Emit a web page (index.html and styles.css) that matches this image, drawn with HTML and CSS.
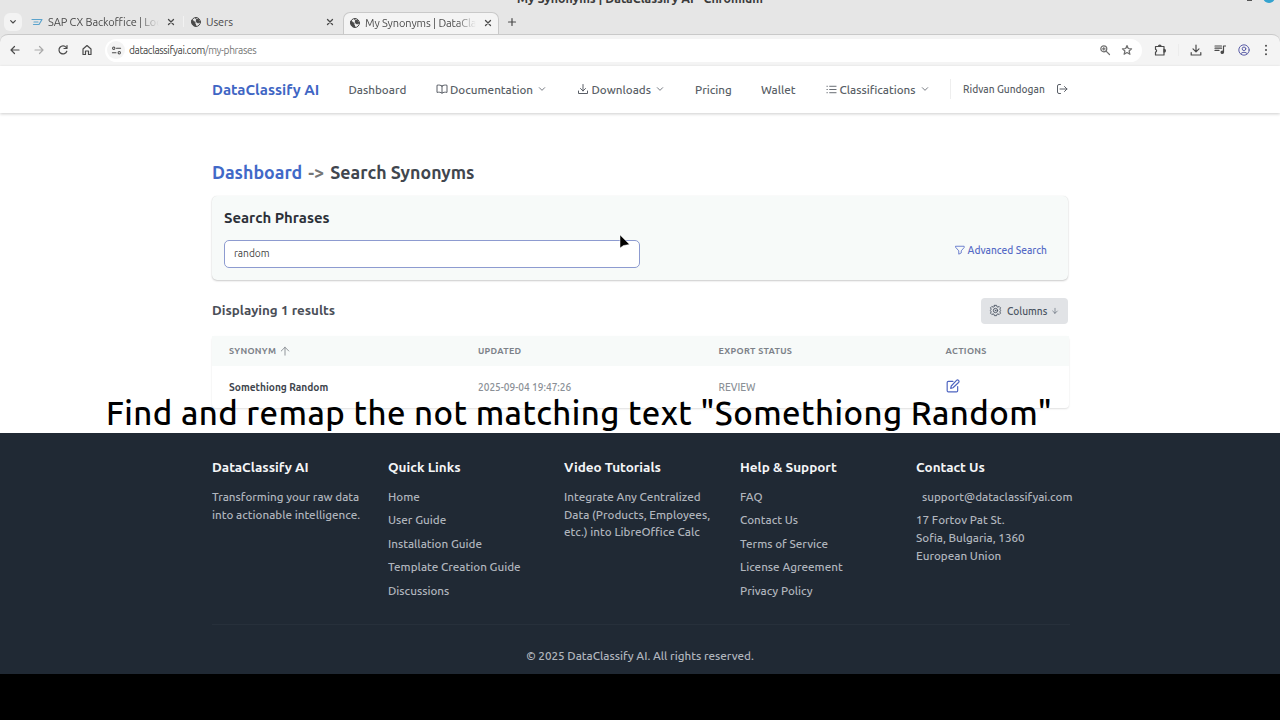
FILE: index.html
```html
<!DOCTYPE html>
<html lang="en">

<head>
    <meta charset="UTF-8">
    <meta name="viewport" content="width=device-width, initial-scale=1.0">
    <title>My Synonyms | DataClassify AI</title>
    <link rel="stylesheet" href="styles.css">
</head>

<body>
    <div class="browser">
        <div class="titlebar">
            <span class="window-title">My Synonyms | DataClassify AI - Chromium</span>
            <span class="window-min"></span>
            <span class="window-close"></span>
        </div>
        <div class="tabs">
            <div class="tab-search">
                <svg class="icon-8" viewBox="0 0 24 24"><path d="M5 8l7 7 7-7" stroke-width="3.5"/></svg>
            </div>
            <div class="tab tab-sap">
                <svg class="sap" viewBox="0 0 12 8"><path d="M1 1.500H11L8 6.500H2.500M3 4h4"/></svg>
                <span class="tab-title fade">SAP CX Backoffice | Loc</span>
                <span class="tab-close"><svg viewBox="0 0 8 8"><path d="M1.500 1.500l5 5M6.500 1.500l-5 5"/></svg></span>
            </div>
            <div class="tab tab-users">
                <svg class="globe" viewBox="0 0 12 12"><circle cx="6" cy="6" r="4.500"/><path class="fill" d="M2 4.500C4 5 5.500 6 5 7.500L6 10C3 10 1.500 7 2 4.500zM6 1.500C5 3.500 7 4 8 3l2 3-2 1-2-1.500" /></svg>
                <span class="tab-title">Users</span>
                <span class="tab-close"><svg viewBox="0 0 8 8"><path d="M1.500 1.500l5 5M6.500 1.500l-5 5"/></svg></span>
            </div>
            <div class="tab tab-active">
                <svg class="globe" viewBox="0 0 12 12"><circle cx="6" cy="6" r="4.500"/><path class="fill" d="M2 4.500C4 5 5.500 6 5 7.500L6 10C3 10 1.500 7 2 4.500zM6 1.500C5 3.500 7 4 8 3l2 3-2 1-2-1.500" /></svg>
                <span class="tab-title fade">My Synonyms | DataCla</span>
                <span class="tab-close"><svg viewBox="0 0 8 8"><path d="M1.500 1.500l5 5M6.500 1.500l-5 5"/></svg></span>
            </div>
            <svg class="tab-new" viewBox="0 0 10 10"><path d="M5 1.500v7M1.500 5h7"/></svg>
        </div>
        <div class="toolbar">
            <svg class="tool" viewBox="0 0 12 12"><path d="M10 6H2M5.500 2.500L2 6l3.500 3.500"/></svg>
            <svg class="tool muted" viewBox="0 0 12 12"><path d="M2 6h8M6.500 2.500L10 6l-3.500 3.500"/></svg>
            <svg class="tool" viewBox="0 0 12 12"><path d="M9.800 7.200A4 4 0 1 1 9.200 3.500M10 1.500v3H7"/></svg>
            <svg class="tool" viewBox="0 0 12 12"><path d="M2 10.500V5l4-3.500L10 5v5.500H7.500V7h-3v3.500z"/></svg>
            <div class="omnibox">
                <span class="site-info"><svg viewBox="0 0 12 12"><circle cx="3" cy="3.500" r="1.300"/><path d="M6 3.500h4.500M1.500 8.500h4"/><circle cx="9" cy="8.500" r="1.300"/></svg></span>
                <span class="url">dataclassifyai.com<span>/my-phrases</span></span>
                <svg class="tool soft zoom-in" viewBox="0 0 12 12"><circle cx="4.800" cy="4.800" r="3"/><path d="M7.300 7.300L10.500 10.500M3.500 4.800h2.600M4.800 3.500v2.600"/></svg>
                <svg class="tool soft" viewBox="0 0 12 12"><path d="M6 1.500l1.300 3 3.300.3-2.500 2.200.8 3.300L6 8.600l-2.900 1.700.8-3.300-2.500-2.200 3.300-.3z"/></svg>
            </div>
            <svg class="tool puzzle" viewBox="0 0 12 12"><path d="M1.500 2.500h8.500v8.500h-8.500v-2.800a1.500 1.500 0 0 0 0-2.900z"/><path class="fill" d="M4.500 2.500a1.300 1.300 0 0 1 2.600 0zM10 5.300a1.400 1.400 0 0 1 0 2.800z"/></svg>
            <span class="tool-line"></span>
            <svg class="tool download" viewBox="0 0 12 12"><path d="M6 1v6.500M3 4.800l3 3 3-3M1.200 8.500v2.500h9.600V8.500"/></svg>
            <svg class="tool music" viewBox="0 0 12 12"><path d="M1 2h6.500M1 4.200h6.500M1 6.400h4M9.500 8V2h2"/><circle class="fill" cx="8.300" cy="8.300" r="1.200"/></svg>
            <svg class="tool profile" viewBox="0 0 12 12"><circle cx="6" cy="6" r="5.200"/><circle cx="6" cy="4.800" r="1.800"/><path d="M2.700 9.800C4 7.700 8 7.700 9.300 9.800"/></svg>
            <svg class="tool more" viewBox="0 0 12 12"><circle cx="6" cy="1.800" r="1"/><circle cx="6" cy="6" r="1"/><circle cx="6" cy="10.200" r="1"/></svg>
        </div>
    </div>

    <header class="header">
        <nav class="nav">
            <a class="brand">DataClassify AI</a>
            <a>Dashboard</a>
            <a>
                <svg class="icon-12" viewBox="0 0 24 24"><path d="M12 6C9.500 4.200 6 3.600 2 4.500v14.300c4-.9 7.500-.3 10 1.500 2.500-1.800 6-2.400 10-1.500V4.500C18 3.600 14.500 4.200 12 6zm0 0v14.300"/></svg>
                <span class="nav-text">Documentation</span>
                <svg class="chevron" viewBox="0 0 24 24"><path d="M4 8l8 8 8-8"/></svg>
            </a>
            <a>
                <svg class="icon-12" viewBox="0 0 24 24"><path d="M3 16v5h18v-5M7 11l5 5 5-5M12 3v13"/></svg>
                <span class="nav-text">Downloads</span>
                <svg class="chevron" viewBox="0 0 24 24"><path d="M4 8l8 8 8-8"/></svg>
            </a>
            <a>Pricing</a>
            <a>Wallet</a>
            <a>
                <svg class="icon-11" viewBox="0 0 24 24"><path d="M8 5h14M8 12h14M8 19h14M2 5h1M2 12h1M2 19h1"/></svg>
                <span class="nav-text">Classifications</span>
                <svg class="chevron" viewBox="0 0 24 24"><path d="M4 8l8 8 8-8"/></svg>
            </a>
            <div class="user">
                <span>Ridvan Gundogan</span>
                <svg class="icon-12" viewBox="0 0 24 24"><path d="M9 3H6a3 3 0 0 0-3 3v12a3 3 0 0 0 3 3h3M8 12h14M17 7l5 5-5 5"/></svg>
            </div>
        </nav>
    </header>

    <main class="main">
        <h1 class="breadcrumb"><a>Dashboard</a><span class="arrow">-&gt;</span><span>Search Synonyms</span></h1>

        <section class="search">
            <div>
                <h2>Search Phrases</h2>
                <div class="search-input">random</div>
            </div>
            <a class="advanced">
                <svg class="icon-10" viewBox="0 0 24 24"><path d="M2 3h20v3l-7 8v5l-6 3v-8L2 6z"/></svg>
                <span>Advanced Search</span>
            </a>
        </section>

        <div class="results-bar">
            <h3>Displaying 1 results</h3>
            <div class="columns-btn">
                <svg class="icon-13" viewBox="0 0 24 24"><path d="M10 2.500h4l.6 2.500 1.800.8 2.300-1.300 2.600 2.600-1.300 2.300.8 1.800.7.8-.7.8-.8 1.800 1.300 2.300-2.600 2.600-2.300-1.300-1.800.8-.6 2.500h-4l-.6-2.500-1.800-.8-2.300 1.300-2.600-2.600L4 14.600l-.8-1.800-.7-.8.7-.8.8-1.800-1.300-2.300 2.600-2.600 2.300 1.300 1.800-.8z"/><circle cx="12" cy="12" r="4"/><circle cx="12" cy="12" r=".6"/></svg>
                <span>Columns</span>
                <svg class="icon-8" viewBox="0 0 24 24"><path d="M12 4v15M5 12l7 7 7-7"/></svg>
            </div>
        </div>

        <div class="table">
            <div class="row table-head">
                <span>SYNONYM <svg class="icon-10" viewBox="0 0 24 24"><path d="M12 22V3M3 12l9-9 9 9"/></svg></span>
                <span>UPDATED</span>
                <span>EXPORT STATUS</span>
                <span>ACTIONS</span>
            </div>
            <div class="row table-row">
                <span class="synonym">Somethiong Random</span>
                <span>2025-09-04 19:47:26</span>
                <span>REVIEW</span>
                <span><svg class="edit" viewBox="0 0 24 24"><path d="M12 4H4a2 2 0 0 0-2 2v14a2 2 0 0 0 2 2h14a2 2 0 0 0 2-2v-7M9 12l9-9.500a2.300 2.300 0 0 1 3.500 3.500L12 15l-4 1z"/></svg></span>
            </div>
        </div>
    </main>

    <footer class="footer">
        <div class="footer-cols">
            <div>
                <h4>DataClassify AI</h4>
                <p>Transforming your raw data<br>into actionable intelligence.</p>
            </div>
            <div>
                <h4>Quick Links</h4>
                <ul>
                    <li>Home</li>
                    <li>User Guide</li>
                    <li>Installation Guide</li>
                    <li>Template Creation Guide</li>
                    <li>Discussions</li>
                </ul>
            </div>
            <div>
                <h4>Video Tutorials</h4>
                <p>Integrate Any Centralized<br>Data (Products, Employees,<br>etc.) into LibreOffice Calc</p>
            </div>
            <div>
                <h4>Help &amp; Support</h4>
                <ul>
                    <li>FAQ</li>
                    <li>Contact Us</li>
                    <li>Terms of Service</li>
                    <li>License Agreement</li>
                    <li>Privacy Policy</li>
                </ul>
            </div>
            <div>
                <h4>Contact Us</h4>
                <p class="email">support@dataclassifyai.com</p>
                <p>17 Fortov Pat St.<br>Sofia, Bulgaria, 1360<br>European Union</p>
            </div>
        </div>
        <p class="copyright">© 2025 DataClassify AI. All rights reserved.</p>
    </footer>

    <!-- video overlay -->
    <div class="caption">Find and remap the not matching text "Somethiong Random"</div>
    <svg class="cursor" viewBox="0 0 12 16"><path d="M1 1v13l3.500-2.500 6-1z"/></svg>
</body>

</html>
```

FILE: styles.css
```css
* {
    box-sizing: border-box;
}

body {
    margin: 0;
    height: 720px;
    overflow: hidden;
    position: relative;
    background: #000;
    font-family: Ubuntu, "Noto Sans", sans-serif;
    font-size: 11.67px;
    font-weight: 500;
    color: #4b5563;
    white-space: nowrap;
}

h1, h2, h3, h4, p, ul {
    margin: 0;
    padding: 0;
}

svg {
    display: block;
    flex: none;
    fill: none;
    stroke: currentColor;
    stroke-width: 2;
    stroke-linecap: round;
    stroke-linejoin: round;
}

.icon-8 { width: 8px; height: 8px; }
.icon-10 { width: 10px; height: 10px; }
.icon-11 { width: 11px; height: 11px; }
.icon-12 { width: 12px; height: 12px; }
.icon-13 { width: 13px; height: 13px; }

/* Browser window */
.browser {
    height: 66px;
    background: #e6e6e6;
    font-weight: 400;
    color: #4a4a4a;
}

.titlebar {
    height: 12px;
    position: relative;
}

.window-title {
    position: absolute;
    left: 0;
    right: 0;
    top: -10px;
    text-align: center;
    font-size: 12.35px;
    line-height: 16px;
    font-weight: 700;
    color: #3a3a3a;
}

.window-min {
    position: absolute;
    left: 1247px;
    top: -1px;
    width: 5px;
    height: 2px;
    background: #555;
}

.window-close {
    position: absolute;
    left: 1263px;
    top: -9px;
    width: 12px;
    height: 12px;
    border-radius: 50%;
    background: #35a3cf;
}

.tabs {
    display: flex;
    height: 22px;
    align-items: center;
    padding-left: 4px;
    font-size: 11px;
}

.tab-search {
    display: flex;
    align-items: center;
    justify-content: center;
    width: 18px;
    height: 18px;
    margin-bottom: 2px;
    border-radius: 6px;
    background: #f3f3f3;
}

.tab {
    display: flex;
    align-items: center;
    height: 22px;
    padding-bottom: 2px;
}

.tab-title {
    flex: 1;
    margin-left: 4px;
    overflow: hidden;
    letter-spacing: -0.1px;
}

.tab-close svg {
    width: 8px;
    height: 8px;
    stroke-width: 1.3;
}

.tab-sap {
    width: 152px;
    margin-left: 9px;
    padding-right: 8px;
}

.tab-sap .tab-title {
    margin: 0 8px 0 5px;
}

.sap {
    width: 12px;
    height: 8px;
    stroke: #5ba3cc;
    stroke-width: 1.2;
}

.tab-users {
    width: 160px;
    padding: 0 9px 2px 7px;
    background: linear-gradient(#f2f2f2, #f2f2f2) no-repeat 0 4px / 1px 11px;
}

.tab-active {
    width: 156px;
    padding: 0 6px 2px 5px;
    background: #f4f4f4;
    border: 1px solid #c9c9c9;
    border-bottom: 0;
    border-radius: 7px 7px 0 0;
}

.tab-active .tab-title {
    margin-right: 8px;
}

.fade {
    -webkit-mask-image: linear-gradient(to right, #000 82%, transparent);
    mask-image: linear-gradient(to right, #000 82%, transparent);
}

.globe {
    width: 12px;
    height: 12px;
    stroke-width: 1;
}

.tab-new {
    width: 10px;
    height: 10px;
    margin: 0 0 2px 8px;
    stroke-width: 1.2;
}

.toolbar {
    display: flex;
    align-items: center;
    height: 32px;
    padding: 0 0 1px 9px;
    background: #f4f4f4;
    border-top: 1px solid #c9c9c9;
    border-radius: 8px 8px 0 0;
}

.tool {
    width: 12px;
    height: 12px;
    margin-right: 12px;
    stroke-width: 1.2;
}

.muted {
    color: #aaa;
}

.soft {
    color: #707070;
}

.omnibox {
    display: flex;
    align-items: center;
    width: 1037px;
    height: 23px;
    padding-left: 2px;
    border-radius: 12px;
    background: #fff;
}

.site-info {
    display: flex;
    align-items: center;
    justify-content: center;
    width: 18px;
    height: 18px;
    border-radius: 50%;
    background: #f4f4f4;
}

.site-info svg {
    width: 11px;
    height: 11px;
    stroke-width: 1.1;
}

.url {
    flex: 1;
    margin-left: 4px;
    font-size: 10.2px;
    letter-spacing: -0.4px;
    color: #444;
}

.url span {
    color: #777;
}

.zoom-in {
    margin-right: 10px;
}

.omnibox .tool:last-child {
    margin-right: 9px;
}

.puzzle {
    margin: 0 0 0 12px;
}

.fill {
    fill: currentColor;
}

.tool-line {
    width: 1px;
    height: 12px;
    margin: 0 11px 0 12px;
    background: #ececec;
}

.tool.profile {
    color: #5c5fa8;
    stroke-width: 1;
    margin-right: 10px;
}

.more {
    fill: currentColor;
    stroke: none;
    margin-right: 0;
}

/* Site header */
.header {
    height: 47px;
    padding-left: 212px;
    background: #fff;
    box-shadow: 0 1px 3px rgba(0, 0, 0, 0.2);
    position: relative;
}

.nav {
    display: grid;
    grid-template-columns: 136.5px 87px 141.5px 118px 66px 65px 124px 118px;
    align-items: center;
    height: 46px;
    color: #5a5f67;
}

.nav a {
    display: flex;
    align-items: center;
}

.nav .brand {
    font-size: 15px;
    font-weight: 700;
    color: #3f66c4;
}

.nav-text {
    margin: 0 5px 0 2.5px;
}

.chevron {
    width: 8px;
    height: 8px;
    stroke-width: 2.5;
}

.user {
    display: flex;
    align-items: center;
    justify-content: space-between;
    height: 20px;
    padding-left: 12px;
    border-left: 1px solid #eee;
    font-size: 10.2px;
}

/* Content */
.main {
    height: 320px;
    padding: 47px 212px 0;
    background: #fff;
}

.breadcrumb {
    display: flex;
    gap: 6px;
    font-size: 17.8px;
    line-height: 24px;
    color: #41464e;
}

.breadcrumb a {
    color: #4169c8;
}

.breadcrumb .arrow {
    width: 16px;
    color: #777;
}

.search {
    display: flex;
    align-items: center;
    justify-content: space-between;
    height: 84px;
    margin-top: 12px;
    padding: 0 21px 0 12px;
    background: #f7faf9;
    border-radius: 5px;
    box-shadow: 0 1px 2px rgba(0, 0, 0, 0.2), 0 0 1px rgba(0, 0, 0, 0.12);
}

.search h2 {
    font-size: 14.9px;
    line-height: 18px;
    color: #2b3038;
}

.search-input {
    width: 416px;
    height: 28px;
    margin-top: 13px;
    padding-left: 9px;
    border: 1px solid #8d9bd0;
    border-radius: 5px;
    background: #fff;
    font-size: 10.2px;
    font-weight: 400;
    line-height: 25px;
    color: #444;
}

.advanced {
    display: flex;
    align-items: center;
    gap: 3px;
    margin-top: 24px;
    font-size: 10.2px;
    color: #566bc6;
}

.results-bar {
    display: flex;
    align-items: center;
    justify-content: space-between;
    height: 26px;
    margin-top: 18px;
}

.results-bar h3 {
    margin-bottom: 1px;
    font-size: 13.4px;
    font-weight: 600;
    color: #4a4e57;
}

.columns-btn {
    display: flex;
    align-items: center;
    width: 87px;
    height: 26px;
    padding: 0 0 1px 8px;
    border-radius: 4px;
    background: #e1e3e6;
    font-size: 10.2px;
}

.columns-btn svg {
    stroke-width: 1.7;
}

.columns-btn span {
    margin: 0 4px 0 5px;
}

.table {
    margin-top: 12px;
    margin-right: -1px;
    height: 72px;
    box-shadow: 0 1px 2px rgba(0, 0, 0, 0.13);
    border-radius: 4px;
}

.row {
    display: grid;
    grid-template-columns: 249px 240.5px 227px 100px;
    align-items: center;
    padding-left: 17px;
}

.table-head {
    height: 30px;
    padding-bottom: 1px;
    background: #f7faf9;
    font-size: 9px;
    font-weight: 600;
    letter-spacing: 0.3px;
    color: #7d8289;
}

.table-head span {
    display: flex;
    gap: 4px;
    align-items: center;
}

.table-row {
    height: 42px;
    font-size: 10.1px;
    color: #8a8f96;
}

.synonym {
    font-size: 10.2px;
    font-weight: 600;
    color: #41464e;
}

.edit {
    width: 14px;
    height: 14px;
    margin-bottom: 3px;
    color: #4c63c0;
}

/* Footer */
.footer {
    height: 241px;
    padding: 25px 210px 0 212px;
    background: #202934;
    color: #b0b5bd;
}

.footer-cols {
    display: grid;
    grid-template-columns: repeat(5, 176px);
    height: 166px;
}

.footer h4 {
    margin-bottom: 12px;
    font-size: 13.5px;
    line-height: 18px;
    color: #f4f5f7;
}

.footer p {
    line-height: 17.6px;
}

.footer ul {
    list-style: none;
}

.footer li {
    line-height: 17.6px;
    margin-bottom: 5.9px;
}

.footer .email {
    margin: 0 0 5.9px 6px;
}

.footer .copyright {
    padding: 22px 2px 0 0;
    border-top: 1px solid #27303b;
    text-align: center;
}

/* Video overlay */
.caption {
    position: absolute;
    left: 106px;
    top: 391px;
    font-size: 33px;
    line-height: 44px;
    font-weight: 500;
    letter-spacing: 0.45px;
    color: #000;
}

.cursor {
    position: absolute;
    left: 619px;
    top: 234px;
    width: 12px;
    height: 16px;
    fill: #000;
    stroke: #fff;
    stroke-width: 0.5;
}
```
